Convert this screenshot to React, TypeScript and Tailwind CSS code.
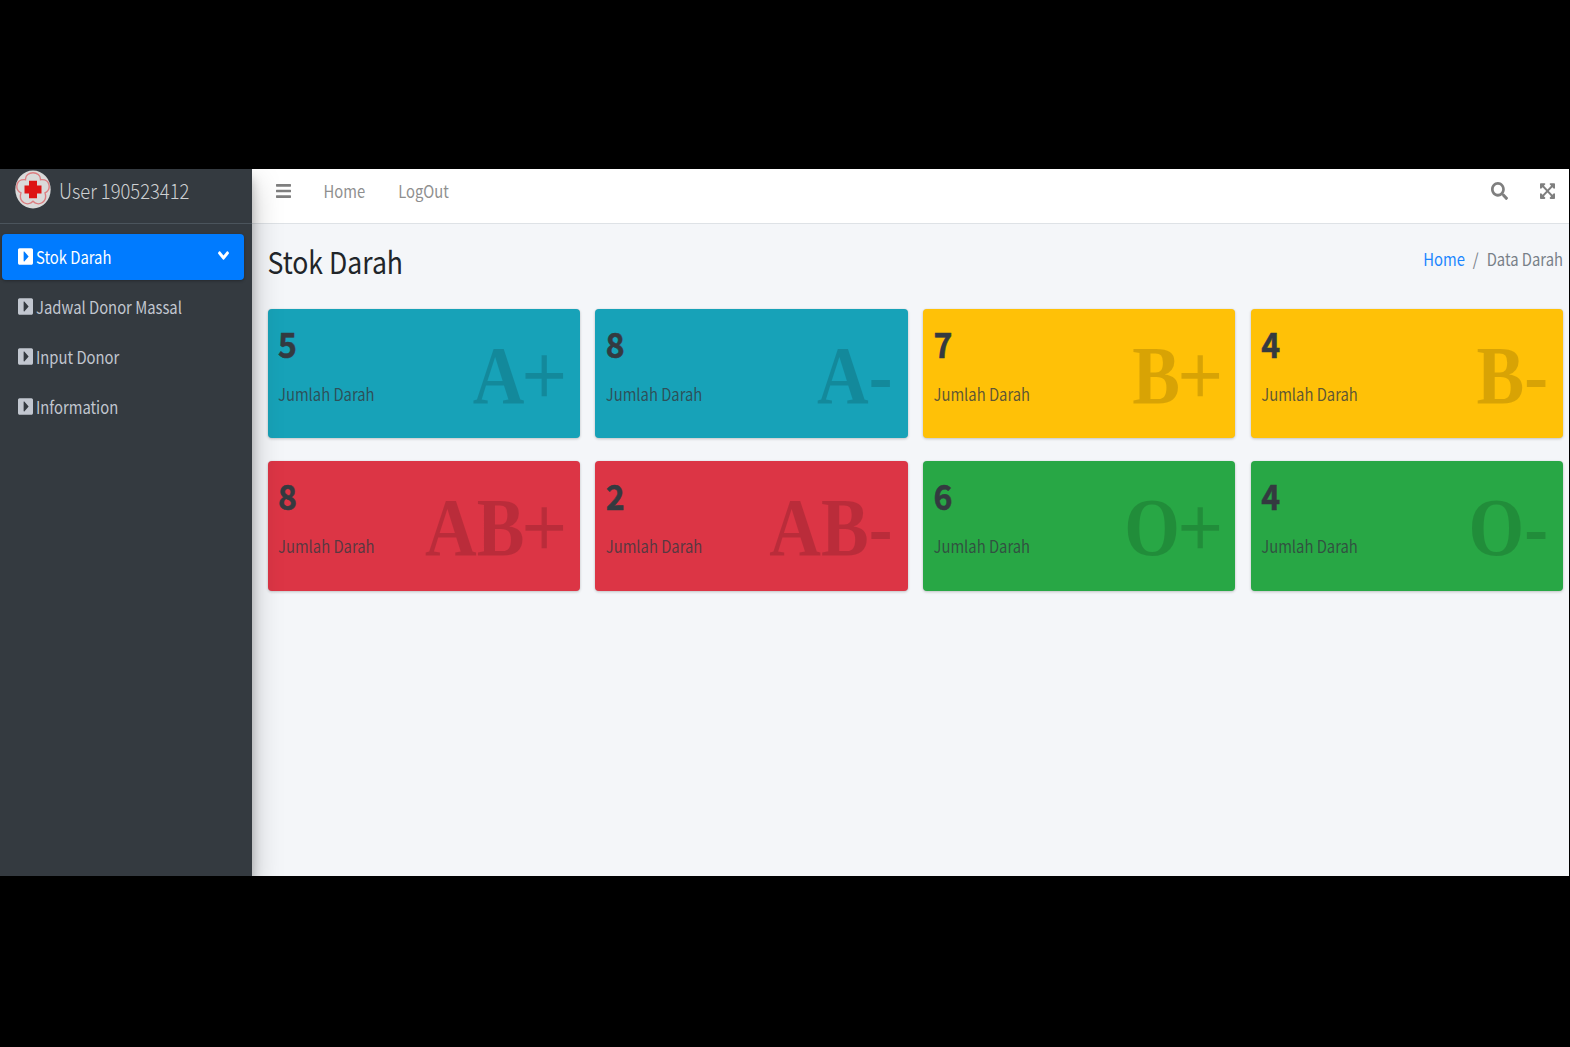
import type { ReactNode } from 'react';
import { FaBars, FaSearch, FaCaretSquareRight, FaAngleDown, FaExpandArrowsAlt } from 'react-icons/fa';

const menu = ['Stok Darah', 'Jadwal Donor Massal', 'Input Donor', 'Information'];

const stock = [
  { group: 'A', rhesus: '+', count: 5, bg: 'bg-[#17a2b8]' },
  { group: 'A', rhesus: '-', count: 8, bg: 'bg-[#17a2b8]' },
  { group: 'B', rhesus: '+', count: 7, bg: 'bg-[#ffc107]' },
  { group: 'B', rhesus: '-', count: 4, bg: 'bg-[#ffc107]' },
  { group: 'AB', rhesus: '+', count: 8, bg: 'bg-[#dc3545]' },
  { group: 'AB', rhesus: '-', count: 2, bg: 'bg-[#dc3545]' },
  { group: 'O', rhesus: '+', count: 6, bg: 'bg-[#28a745]' },
  { group: 'O', rhesus: '-', count: 4, bg: 'bg-[#28a745]' },
];

function Tall({ children, className = '' }: { children: ReactNode; className?: string }) {
  return <span className={`inline-block scale-y-[1.14] whitespace-nowrap ${className}`}>{children}</span>;
}

function Logo() {
  return (
    <svg viewBox="0 0 36 40" preserveAspectRatio="none" className="mt-px h-[39px] w-9 shrink-0">
      <ellipse cx="18" cy="20" rx="17.7" ry="19.5" fill="#dadada" />
      <path
        d="M10.5 10C10 0.5 26 0.5 25.5 10C35.5 9 36.5 20 30 23.5C33 33 23 38 18 32C13 38 3 33 6 23.5C-0.5 20 0.5 9 10.5 10Z"
        fill="none"
        stroke="#dc7d80"
        strokeWidth="1.4"
      />
      <path d="M14 11h8v5h4.500v8h-4.500v5h-8v-5h-4.500v-8h4.500z" fill="#dd1515" />
    </svg>
  );
}

export default function App() {
  return (
    <div className="h-[1047px] w-[1570px] overflow-hidden bg-black pt-[169px] font-['Noto_Sans_CJK_SC',sans-serif] text-[14.8px] leading-6">
      <div className="flex h-[707px] w-[1569px] overflow-hidden bg-[#f4f6f9]">
        <aside className="z-10 flex w-[251.5px] shrink-0 flex-col bg-[#343a40] text-[#c2c7d0] shadow-[0_14px_28px_rgba(0,0,0,.25),0_10px_10px_rgba(0,0,0,.22)]">
          <div className="flex h-[55px] shrink-0 items-start border-b border-[#4b545c] pl-[15px]">
            <Logo />
            <Tall className="ml-2 mt-[9px] text-[18.4px] font-light text-[#cfd1d3]">User 190523412</Tall>
          </div>
          <nav className="flex flex-col gap-1 pl-0.5 pr-2 pt-[10px]">
            {menu.map((label, i) => (
              <a
                key={label}
                className={`flex h-[46px] items-center rounded pb-px pl-4 pr-[15px] ${i === 0 ? 'bg-[#007bff] text-white shadow-[0_1px_3px_rgba(0,0,0,.3)]' : ''}`}
              >
                <FaCaretSquareRight preserveAspectRatio="none" className="mr-[3px] h-[19px] w-[15px]" />
                <Tall>{label}</Tall>
                {i === 0 && <FaAngleDown preserveAspectRatio="none" className="mb-0.5 ml-auto h-[21px] w-[11px]" />}
              </a>
            ))}
          </nav>
        </aside>
        <div className="flex min-w-0 flex-1 flex-col">
          <header className="flex h-[55px] shrink-0 items-center border-b border-[#dee2e6] bg-white pb-[11px] pl-6 pr-[14.500px] text-[#7f7f7f]">
            <FaBars preserveAspectRatio="none" className="h-[18px] w-[15px]" />
            <Tall className="ml-[33px] text-[#8f8f8f]">Home</Tall>
            <Tall className="ml-[33px] text-[#8f8f8f]">LogOut</Tall>
            <FaSearch preserveAspectRatio="none" className="ml-auto h-[18px] w-[17px]" />
            <FaExpandArrowsAlt preserveAspectRatio="none" className="ml-8 h-[18px] w-[15px]" />
          </header>
          <main className="flex flex-col pl-4 pr-[6px]">
            <div className="flex h-[85px] items-start justify-between pt-[19px]">
              <h1 className="leading-9">
                <Tall className="text-[26.6px] text-[#212529]">Stok Darah</Tall>
              </h1>
              <div className="flex pt-1">
                <Tall className="text-[#1a85ff]">Home</Tall>
                <Tall className="px-2 text-[#788088]">/</Tall>
                <Tall className="text-[#788088]">Data Darah</Tall>
              </div>
            </div>
            <div className="grid grid-cols-4 grid-rows-[129px_130px] gap-x-[15.5px] gap-y-[23px]">
              {stock.map((s) => (
                <section
                  key={s.group + s.rhesus}
                  className={`flex justify-between rounded pl-[10.500px] pr-[15px] shadow-[0_0_1px_rgba(0,0,0,.13),0_1px_3px_rgba(0,0,0,.2)] ${s.bg}`}
                >
                  <div className="flex flex-col items-start">
                    <h3 className="mt-[11px] h-[46px] leading-[46px]">
                      <span className="inline-block scale-y-[1.1] text-[32px] font-bold text-[#343a40] [-webkit-text-stroke:0.5px_#343a40]">
                        {s.count}
                      </span>
                    </h3>
                    <p className="mt-4">
                      <Tall className="text-[#343a40]/80">Jumlah Darah</Tall>
                    </p>
                  </div>
                  <Tall className="mt-[28px] h-[78px] font-['Liberation_Serif',serif] text-[71.5px] font-bold leading-[78px] text-black opacity-15">
                    {s.group}
                    {s.rhesus === '+' ? (
                      <span className="inline-block scale-x-[1.09] scale-y-[1.04] font-normal [-webkit-text-stroke:1.2px_black]">+</span>
                    ) : (
                      s.rhesus
                    )}
                  </Tall>
                </section>
              ))}
            </div>
          </main>
        </div>
      </div>
    </div>
  );
}
